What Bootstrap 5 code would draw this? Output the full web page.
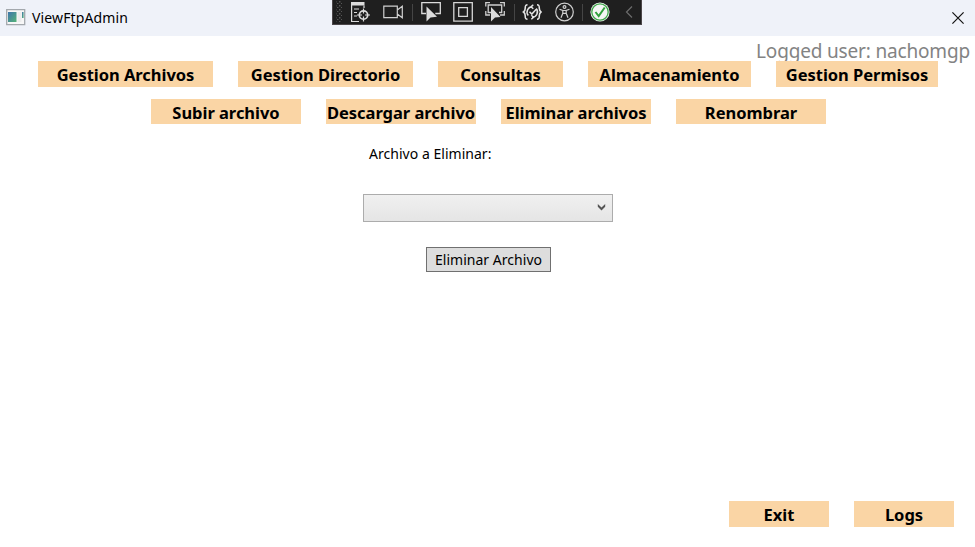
<!DOCTYPE html>
<html lang="es">
<head>
<meta charset="utf-8">
<meta name="viewport" content="width=device-width, initial-scale=1">
<title>ViewFtpAdmin</title>
<link href="https://cdn.jsdelivr.net/npm/bootstrap@5.3.0/dist/css/bootstrap.min.css" rel="stylesheet">
<style>
body{font-family:"Noto Sans","Open Sans",sans-serif;color:#000;background:#fff}
.app-window{height:547px}
.titlebar{height:36px;background:#eff2f9;font-size:14px;padding:0 11px 1px 6px}
.titlebar .caption{letter-spacing:.13px;margin-left:6px}
.debugbar{left:332px;top:0;width:310px;height:25px;background:#1f1f1f;border:1px solid #4b4649;border-top:0;padding-left:2px}
.debugbar svg{display:block;flex:none}
.divider{width:1px;height:17px;background:#454545;margin:0 8px 0 9px}
.divider-tight{margin-right:7px}
.divider-close{margin:0 7px 0 8px}
.ico-tree{margin:0 13px 0 7px}
.ico-frame{margin:0 12px}
.ico-access{margin-left:12px}
.ico-collapse{margin-left:9px}
.workspace{height:511px}
.user-label{right:5px;top:0;height:32px;font-size:19px;line-height:31px;color:#838383;white-space:nowrap;letter-spacing:-.17px}
.tab-row{gap:25px}
.main-tabs{padding:25px 0 0 38px}
.sub-tabs{padding:12px 0 0 151px}
.tile{height:26px;background:#fad5a5;color:#000;border:0;border-radius:0;font-weight:700;font-size:16.5px;line-height:27px;padding:0;white-space:nowrap;letter-spacing:-.03px;overflow:hidden;display:flex;justify-content:center}
.tile:hover{background:#f7ca8f}
.sub-tabs .tile{height:25px;width:150px}
.w-175{width:175px}.w-125{width:125px}.w-163{width:163px}.w-162{width:162px}.w-100px{width:100px}
.delete-form{width:250px;margin-left:363px;padding-top:20px;font-size:14px}
.delete-form label{line-height:20px;padding-left:6px;letter-spacing:.03px;display:block}
.combo{height:28px;margin-top:30px;border:1px solid #acacac;background:linear-gradient(#f0f0f0,#e5e5e5);padding:0 6px 2px 0}
.delete-btn{width:125px;height:25px;margin-top:25px;margin-left:63px;border:1px solid #707070;border-radius:0;background:#ddd;color:#000;font-size:14px;line-height:23px;padding:0;letter-spacing:.03px}
.footer-actions{gap:25px;padding:0 21px 20px 0}
</style>
<script src="https://cdn.jsdelivr.net/npm/bootstrap@5.3.0/dist/js/bootstrap.bundle.min.js"></script>
</head>
<body>
<div class="app-window d-flex flex-column position-relative overflow-hidden">
  <header class="titlebar d-flex align-items-center flex-shrink-0">
    <svg width="20" height="17" viewBox="0 0 20 17"><defs><linearGradient id="pane" x2="1" y2="1"><stop stop-color="#3e75ad"/><stop offset="1" stop-color="#55b377"/></linearGradient></defs><path d="M.7.7h18v15h-18z" fill="#f7f7f7" stroke="#a3a8ad" stroke-width="1.3"/><path d="M2 3h8.500v10H2z" fill="url(#pane)"/><path d="M11.500 3h4v10h-4z" fill="#ececec"/><path d="M16 3h1.600v6H16z" fill="url(#pane)"/></svg>
    <span class="caption">ViewFtpAdmin</span>
    <svg class="ms-auto" width="12" height="12" viewBox="0 0 12 12"><path d="M.4.4l11.200 11.200M11.600.4L.4 11.600" stroke="#111" stroke-width="1.200"/></svg>
  </header>

  <div class="debugbar position-absolute d-flex align-items-center">
    <svg width="8" height="24" viewBox="0 0 8 24"><defs><pattern id="grip" width="4" height="4" patternUnits="userSpaceOnUse"><path d="M0 1h1.400v1.400H0zM2 3h1.400v1.400H2z" fill="#585858"/></pattern></defs><path d="M1 1h6v21H1z" fill="url(#grip)"/></svg>
    <svg class="ico-tree" width="20" height="24" viewBox="0 0 20 24" fill="none" stroke="#dcdcdc" stroke-width="1.200"><path d="M1.600 2v19.500H9M14 5.500V8"/><path d="M1 2h13.500v3.500H1z" fill="#dcdcdc" stroke="none"/><path d="M4 9h5M4 12.500h3M4 16h3"/><circle cx="13.500" cy="15" r="4.200" stroke-width="1.700"/><path d="M13.500 8.500v5M13.500 16.500v5M7 15h5M15 15h5"/></svg>
    <svg width="20" height="24" viewBox="0 0 20 24" fill="none" stroke="#d0d0d0" stroke-width="1.200"><path d="M.8 6.200h13.500v11.500H.8zM14.300 10l5-3.800v11.500l-5-3.800"/></svg>
    <span class="divider"></span>
    <svg width="20" height="24" viewBox="0 0 20 24"><path d="M5 13.500H.8V2.600h18.500v10.900h-5" fill="none" stroke="#dcdcdc" stroke-width="1.300"/><path d="M5.500 6.500v15l4-4 6.500-.7z" fill="#dcdcdc"/></svg>
    <svg class="ico-frame" width="20" height="24" viewBox="0 0 20 24" fill="none" stroke="#d6d6d6" stroke-width="1.300"><path d="M.8 2.700h18.500v18.500H.8zM5.700 7.600h8.700v8.700H5.700z"/></svg>
    <svg width="20" height="24" viewBox="0 0 20 24"><path d="M.8 6.500V2.600H5M15 2.600h4.300v3.900M.8 11v4H5M15 15h4.300v-4M6 12.500H3.200V5h13.500v7.500H14" fill="none" stroke="#cfcfcf" stroke-width="1.300"/><path d="M6 7v14.500l4-4 5.500-.5z" fill="#dcdcdc"/></svg>
    <span class="divider divider-tight"></span>
    <svg width="20" height="24" viewBox="0 0 20 24" fill="none" stroke="#e4e4e4" stroke-width="1.600"><path d="M5.500 4.800c-2.300 0-2.300 1.200-2.300 3.500S2.800 11.200 1.500 12c1.300.8 1.700 1.400 1.700 3.700s0 3.500 2.300 3.500M15 4.800c2.300 0 2.300 1.200 2.300 3.500s.4 2.900 1.700 3.700c-1.300.8-1.700 1.400-1.700 3.700s0 3.500-2.300 3.500"/><path d="M10.500 6.800A5.300 5.300 0 0 0 6.300 15.500M14.200 8.500a5.300 5.300 0 0 1-4.200 8.700M11.300 4.800L9 6.800l2.300 2M9.300 19.200l2.300-2-2.300-2M7.500 11.800l2.300 2.300 4.200-4.600" stroke-width="1.500"/></svg>
    <svg class="ico-access" width="20" height="24" viewBox="0 0 20 24" fill="none" stroke="#cfcfcf" stroke-width="1.200"><circle cx="10.500" cy="12" r="8.800"/><circle cx="10.500" cy="7" r="1.400"/><path d="M5.500 9.200l3.300 1.300v2.800l-1.800 4.500M15.500 9.200l-3.300 1.300v2.800l1.800 4.500M8.800 10.500h3.400M8.800 13.300h3.400"/></svg>
    <span class="divider divider-close"></span>
    <svg width="20" height="24" viewBox="0 0 20 24"><circle cx="10" cy="12" r="9.600" fill="#f4f6f4"/><circle cx="10" cy="12" r="8.200" fill="none" stroke="#3fa84a" stroke-width="1.300"/><path d="M5.500 12l3.200 4 6-8.500" fill="none" stroke="#2fa03b" stroke-width="2"/></svg>
    <svg class="ico-collapse" width="20" height="24" viewBox="0 0 20 24"><path d="M13 6.500L7.500 12l5.500 5.500" fill="none" stroke="#6c6c6c" stroke-width="1.200"/></svg>
  </div>

  <main class="workspace d-flex flex-column position-relative">
    <div class="user-label position-absolute">Logged user: nachomgp</div>
    <nav class="tab-row main-tabs d-flex position-relative">
      <button class="tile w-175">Gestion Archivos</button>
      <button class="tile w-175">Gestion Directorio</button>
      <button class="tile w-125">Consultas</button>
      <button class="tile w-163">Almacenamiento</button>
      <button class="tile w-162">Gestion Permisos</button>
    </nav>
    <nav class="tab-row sub-tabs d-flex position-relative">
      <button class="tile">Subir archivo</button>
      <button class="tile">Descargar archivo</button>
      <button class="tile">Eliminar archivos</button>
      <button class="tile">Renombrar</button>
    </nav>
    <section class="delete-form">
      <label>Archivo a Eliminar:</label>
      <div class="combo d-flex align-items-center justify-content-end" role="combobox" aria-label="Archivo">
        <svg width="9" height="7" viewBox="0 0 9 7"><path d="M.8 0v2.800l3.700 3.700 3.700-3.700V0L4.500 3.600z" fill="#555"/></svg>
      </div>
      <button class="delete-btn btn d-block">Eliminar Archivo</button>
    </section>
    <footer class="footer-actions d-flex justify-content-end mt-auto">
      <button class="tile w-100px">Exit</button>
      <button class="tile w-100px">Logs</button>
    </footer>
  </main>
</div>
</body>
</html>
